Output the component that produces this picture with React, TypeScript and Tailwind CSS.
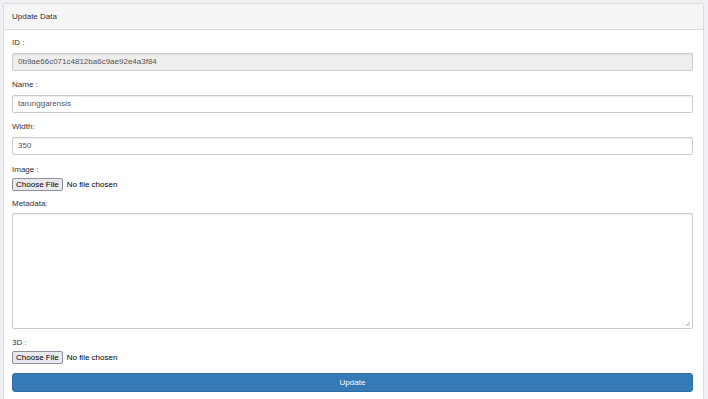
import React from 'react';

const FileRow: React.FC<{ className?: string }> = ({ className = '' }) => (
  <div className={`flex items-center gap-[4px] h-[13px] text-[8px] text-black ${className}`}>
    <span className="h-[13px] px-[3px] flex items-center bg-[#e9e9ed] border border-[#8f8f9d] rounded-[2px] leading-none">
      Choose File
    </span>
    <span>No file chosen</span>
  </div>
);

const Label: React.FC<{ children: React.ReactNode; className?: string }> = ({ children, className = '' }) => (
  <label className={`block h-[12px] leading-[12px] text-[8px] text-[#333] ${className}`}>{children}</label>
);

const App: React.FC = () => {
  return (
    <div className="min-h-screen bg-[#eef0f4] pt-[3px] pl-[3px] pr-[4px] font-['Liberation_Sans',Arial,sans-serif]">
      <div className="bg-white border border-[#dddddd] rounded-[3px] h-[410px]">
        {/* Header */}
        <div className="h-[26px] bg-[#f5f5f5] border-b border-[#dddddd] px-[8px] flex items-center text-[8px] text-[#333]">
          Update Data
        </div>

        <div className="pl-[8px] pr-[10px] pt-[7px]">
          <Label className="mb-[4px]">ID :</Label>
          <div className="h-[18px] bg-[#eeeeee] border border-[#cccccc] rounded-[2px] px-[5px] flex items-center text-[8px] text-[#555] shadow-[inset_0_1px_1px_rgba(0,0,0,0.075)]">
            0b9ae66c071c4812ba6c9ae92e4a3f84
          </div>

          <Label className="mt-[8px] mb-[4px]">Name :</Label>
          <div className="h-[18px] bg-white border border-[#cccccc] rounded-[2px] px-[5px] flex items-center text-[8px] text-[#555] shadow-[inset_0_1px_1px_rgba(0,0,0,0.075)]">
            tarunggarensis
          </div>

          <Label className="mt-[8px] mb-[4px]">Width:</Label>
          <div className="h-[18px] bg-white border border-[#cccccc] rounded-[2px] px-[5px] flex items-center text-[8px] text-[#555] shadow-[inset_0_1px_1px_rgba(0,0,0,0.075)]">
            350
          </div>

          <Label className="mt-[9px] mb-[2px]">Image :</Label>
          <FileRow />

          <Label className="mt-[7px] mb-[3px]">Metadata:</Label>
          <div className="relative h-[116px] bg-white border border-[#cccccc] rounded-[2px] shadow-[inset_0_1px_1px_rgba(0,0,0,0.075)]">
            <svg className="absolute right-[1px] bottom-[1px]" width="6" height="6" viewBox="0 0 6 6">
              <path d="M5 1 L1 5 M5 3.5 L3.5 5" stroke="#999" strokeWidth="0.8" />
            </svg>
          </div>

          <Label className="mt-[8px] mb-[2px]">3D :</Label>
          <FileRow />

          <button className="mt-[9px] w-full h-[19px] bg-[#337ab7] border border-[#2e6da4] rounded-[3px] text-white text-[8px] flex items-center justify-center">
            Update
          </button>
        </div>
      </div>
    </div>
  );
};

export default App;
